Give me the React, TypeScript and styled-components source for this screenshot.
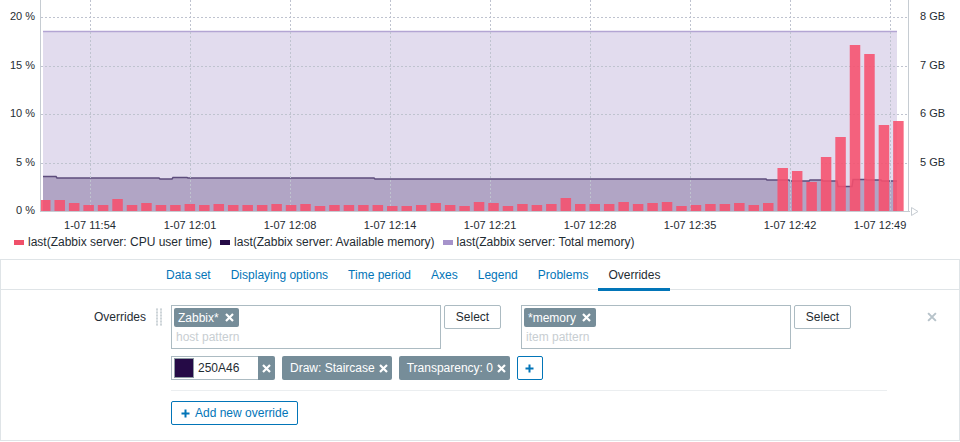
import styled, { createGlobalStyle } from 'styled-components';

const GlobalStyle = createGlobalStyle`
  html, body {
    margin: 0;
    padding: 0;
    background: #ffffff;
  }
  body {
    font-family: "Liberation Sans", Arial, sans-serif;
    font-size: 12px;
    color: #1f2c33;
  }
  * {
    box-sizing: border-box;
  }
`;

const BASE = 211;
const STEP = 48.5;
const BAR_GAP = 14.46;

const BAR_HEIGHTS = [
  11, 11, 8, 6, 6, 12, 6, 8, 6, 6, 7, 6, 7, 6, 6, 6, 7, 6, 7, 5,
  6, 6, 6, 6, 5, 5, 6, 8, 6, 5, 9, 8, 5, 7, 6, 7, 13, 7, 7, 7, 9, 7,
  8, 9, 5, 6, 7, 7, 8, 6, 8, 43, 40, 29, 54, 74, 166, 157, 86, 90,
];

// [x where the value starts, y]
const AVAIL_STEPS: [number, number][] = [
  [43, 176.5], [57, 178], [160, 179], [173, 177.5], [188, 178], [375, 179],
  [767, 180], [790, 181], [810, 180], [823, 181], [838, 186.5], [853, 179.5],
  [867, 180], [882, 181],
];

const LEFT_LABELS = ['0 %', '5 %', '10 %', '15 %', '20 %'];
const RIGHT_LABELS = ['', '5 GB', '6 GB', '7 GB', '8 GB'];
const TIMES = ['11:54', '12:01', '12:08', '12:14', '12:21', '12:28', '12:35', '12:42'];

const ChartSvg = styled.svg`
  display: block;

  text {
    font-size: 11px;
    fill: #1f2c33;
  }
`;

const buildAvailLine = () => {
  let d = `M${AVAIL_STEPS[0][0]},${AVAIL_STEPS[0][1]}`;
  for (let i = 1; i < AVAIL_STEPS.length; i++) {
    const [x, y] = AVAIL_STEPS[i];
    d += ` L${x - 1},${AVAIL_STEPS[i - 1][1]} L${x},${y}`;
  }
  d += ` L897,${AVAIL_STEPS[AVAIL_STEPS.length - 1][1]}`;
  return d;
};

const Chart = () => {
  const line = buildAvailLine();
  const area = `${line} L897,${BASE} L43,${BASE} Z`;

  return (
    <ChartSvg width={960} height={232} viewBox="0 0 960 232">
      <path d={`M43,${BASE} V31 H897 V${BASE} Z`} fill="#e2dcee" />
      <path d="M43,31.5 H897" stroke="#b3a5d3" strokeWidth={1.5} />
      <path d={area} fill="#b1a5c5" />
      <path d={line} stroke="#5d4c7c" strokeWidth={1.5} fill="none" />

      {[1, 2, 3, 4].map((k) => (
        <line
          key={`h${k}`}
          x1={41}
          x2={908}
          y1={Math.round(BASE - k * STEP) + 0.5}
          y2={Math.round(BASE - k * STEP) + 0.5}
          stroke="#bfc3cf"
          strokeDasharray="2 2"
        />
      ))}
      {Array.from({ length: 9 }, (_, i) => 90 + i * 100).map((x) => (
        <line key={`v${x}`} x1={x + 0.5} x2={x + 0.5} y1={0} y2={BASE} stroke="#bfc3cf" strokeDasharray="2 2" />
      ))}

      {BAR_HEIGHTS.map((h, i) => (
        <rect
          key={i}
          x={40 + i * BAR_GAP}
          y={BASE - h}
          width={10.5}
          height={h}
          fill="#f6506d"
          fillOpacity={0.88}
        />
      ))}

      <line x1={40.5} x2={40.5} y1={0} y2={BASE + 1} stroke="#c6ccd2" />
      <line x1={908.5} x2={908.5} y1={0} y2={BASE + 1} stroke="#c6ccd2" />
      <line x1={40} x2={910} y1={BASE + 0.5} y2={BASE + 0.5} stroke="#c6ccd2" />
      <polygon points="911.5,207.5 918,211.5 911.5,215.5" fill="#ffffff" stroke="#c6ccd2" />

      {LEFT_LABELS.map((t, k) => (
        <text key={t} x={35} y={BASE - k * STEP + 0.5} textAnchor="end" dominantBaseline="middle">
          {t}
        </text>
      ))}
      {RIGHT_LABELS.map((t, k) =>
        t ? (
          <text key={t} x={920} y={BASE - k * STEP + 0.5} dominantBaseline="middle">
            {t}
          </text>
        ) : null,
      )}
      {TIMES.map((t, i) => (
        <text key={t} x={90 + i * 100} y={226} textAnchor="middle" dominantBaseline="middle">
          1-07 {t}
        </text>
      ))}
      <text x={880} y={226} textAnchor="middle" dominantBaseline="middle">
        1-07 12:49
      </text>
    </ChartSvg>
  );
};

const Legend = styled.div`
  display: flex;
  align-items: center;
  height: 20px;
  padding-left: 14px;
  gap: 8px;
`;

const LegendItem = styled.div`
  display: flex;
  align-items: center;
  gap: 4px;
  white-space: nowrap;
`;

const Swatch = styled.span<{ $color: string }>`
  display: inline-block;
  width: 10px;
  height: 5px;
  background: ${(p) => p.$color};
`;

const Panel = styled.div`
  margin-top: 7px;
  border: 1px solid #dfe4e7;
  background: #ffffff;
`;

const TabBar = styled.div`
  display: flex;
  height: 30px;
  padding-left: 155px;
  border-bottom: 1px solid #dfe4e7;
`;

const Tab = styled.div<{ $active?: boolean }>`
  display: flex;
  align-items: center;
  height: 31px;
  margin-bottom: -1px;
  padding: 2px 10px 0;
  border-bottom: 3px solid ${(p) => (p.$active ? '#0275b8' : 'transparent')};
  color: ${(p) => (p.$active ? '#1f2c33' : '#0275b8')};
  cursor: pointer;
`;

const Body = styled.div`
  display: grid;
  grid-template-columns: 145px 25px 1fr;
  padding: 15px 22px 15px 0;
`;

const Label = styled.div`
  text-align: right;
  padding-top: 5px;
`;

const Handle = styled.div`
  margin: 3px 0 0 9px;
  width: 7px;
  height: 18px;
  background: radial-gradient(circle, #cdd4d8 1px, transparent 1.3px) 0 0 / 4px 3px;
`;

const Content = styled.div`
  display: flex;
  flex-direction: column;
`;

const PatternRow = styled.div`
  display: flex;
  align-items: flex-start;
`;

const MultiSelect = styled.div<{ $gap?: number }>`
  width: 270px;
  height: 44px;
  margin-left: ${(p) => p.$gap ?? 0}px;
  padding: 2px;
  border: 1px solid #acbbc2;
  display: flex;
  flex-direction: column;
  align-items: flex-start;
`;

const Chip = styled.span`
  display: inline-flex;
  align-items: center;
  gap: 6px;
  height: 19px;
  padding: 0 5px 0 4px;
  background: #768d99;
  color: #ffffff;
  border-radius: 2px;
`;

const Placeholder = styled.span`
  margin: 3px 0 0 2px;
  color: #c8ced2;
`;

const SelectButton = styled.button`
  width: 57px;
  height: 24px;
  margin-left: 3px;
  border: 1px solid #acbbc2;
  border-radius: 2px;
  background: #ffffff;
  color: #1f2c33;
  font: inherit;
  padding: 0;
`;

const RemoveButton = styled.span`
  margin: 7px 0 0 auto;
  display: inline-flex;
`;

const OptionsRow = styled.div`
  display: flex;
  gap: 7px;
  margin-top: 7px;
`;

const ColorGroup = styled.div`
  display: flex;
  height: 24px;
`;

const ColorInput = styled.div`
  display: flex;
  align-items: center;
  gap: 4px;
  width: 87px;
  padding-left: 2px;
  border: 1px solid #acbbc2;
  border-right: none;
  background: #ffffff;
`;

const ColorSwatch = styled.span<{ $color: string }>`
  width: 20px;
  height: 20px;
  background: ${(p) => p.$color};
  border: 1px solid #8d9ba3;
`;

const ClearBox = styled.span`
  display: flex;
  align-items: center;
  justify-content: center;
  width: 17px;
  background: #768d99;
  border-radius: 0 2px 2px 0;
`;

const OptionTag = styled.span`
  display: inline-flex;
  align-items: center;
  gap: 4px;
  height: 24px;
  padding: 0 4px 0 8px;
  background: #768d99;
  color: #ffffff;
  border-radius: 2px;
`;

const OutlineButton = styled.button<{ $square?: boolean }>`
  display: inline-flex;
  align-items: center;
  justify-content: center;
  gap: 5px;
  height: 24px;
  width: ${(p) => (p.$square ? '26px' : 'auto')};
  padding: ${(p) => (p.$square ? '0' : '0 9px')};
  border: 1px solid #0275b8;
  border-radius: 2px;
  background: #ffffff;
  color: #0275b8;
  font: inherit;
`;

const Separator = styled.div`
  width: 716px;
  height: 1px;
  margin: 10px 0;
  background: #ebeef0;
`;

const AddRow = styled.div`
  display: flex;
`;

const Cross = ({ color = '#ffffff', size = 9, weight = 2.2 }: { color?: string; size?: number; weight?: number }) => (
  <svg width={size} height={size} viewBox="0 0 9 9">
    <path d="M1 1L8 8M8 1L1 8" stroke={color} strokeWidth={weight} />
  </svg>
);

const Plus = () => (
  <svg width={9} height={9} viewBox="0 0 9 9">
    <path d="M4.5 0.5V8.5M0.5 4.5H8.5" stroke="#0275b8" strokeWidth={2} />
  </svg>
);

const TABS = ['Data set', 'Displaying options', 'Time period', 'Axes', 'Legend', 'Problems', 'Overrides'];

const App = () => {
  return (
    <>
      <GlobalStyle />
      <Chart />
      <Legend>
        <LegendItem>
          <Swatch $color="#f0506a" />
          last(Zabbix server: CPU user time)
        </LegendItem>
        <LegendItem>
          <Swatch $color="#250a46" />
          last(Zabbix server: Available memory)
        </LegendItem>
        <LegendItem>
          <Swatch $color="#a693cb" />
          last(Zabbix server: Total memory)
        </LegendItem>
      </Legend>

      <Panel>
        <TabBar>
          {TABS.map((t) => (
            <Tab key={t} $active={t === 'Overrides'}>
              {t}
            </Tab>
          ))}
        </TabBar>
        <Body>
          <Label>Overrides</Label>
          <Handle />
          <Content>
            <PatternRow>
              <MultiSelect>
                <Chip>
                  Zabbix*
                  <Cross />
                </Chip>
                <Placeholder>host pattern</Placeholder>
              </MultiSelect>
              <SelectButton>Select</SelectButton>
              <MultiSelect $gap={20}>
                <Chip>
                  *memory
                  <Cross />
                </Chip>
                <Placeholder>item pattern</Placeholder>
              </MultiSelect>
              <SelectButton>Select</SelectButton>
              <RemoveButton>
                <Cross color="#b7c3ca" size={10} weight={1.8} />
              </RemoveButton>
            </PatternRow>
            <OptionsRow>
              <ColorGroup>
                <ColorInput>
                  <ColorSwatch $color="#250a46" />
                  250A46
                </ColorInput>
                <ClearBox>
                  <Cross />
                </ClearBox>
              </ColorGroup>
              <OptionTag>
                Draw: Staircase
                <Cross />
              </OptionTag>
              <OptionTag>
                Transparency: 0
                <Cross />
              </OptionTag>
              <OutlineButton $square>
                <Plus />
              </OutlineButton>
            </OptionsRow>
            <Separator />
            <AddRow>
              <OutlineButton>
                <Plus />
                Add new override
              </OutlineButton>
            </AddRow>
          </Content>
        </Body>
      </Panel>
    </>
  );
};

export default App;
